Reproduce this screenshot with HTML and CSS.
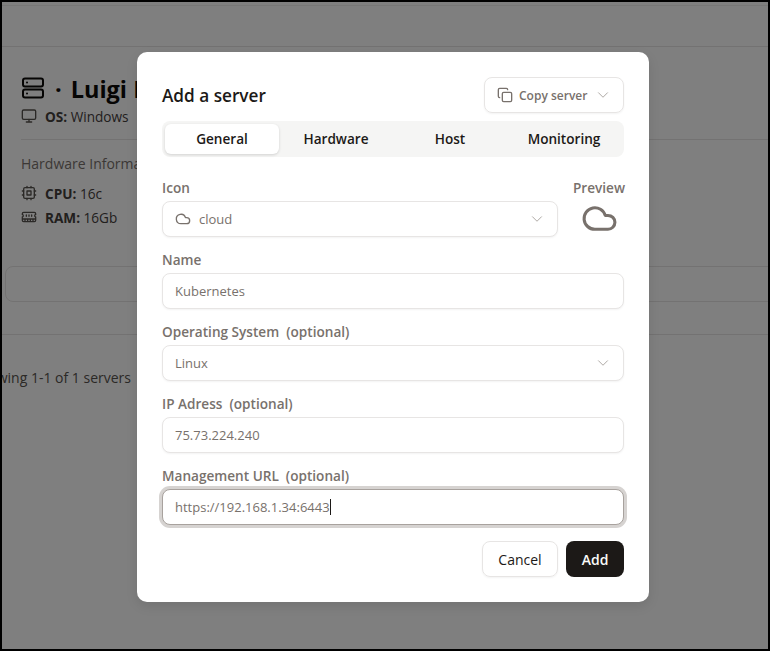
FILE: index.html
```html
<!DOCTYPE html>
<html lang="en">
<head>
<meta charset="utf-8">
<title>Add a server</title>
<link rel="stylesheet" href="styles.css">
</head>
<body>
<div class="frame">
  <div class="page">
    <div class="topbar"><div class="topbar-line"></div></div>
    <section class="details">
      <div class="title-row">
        <svg class="title-icon" viewBox="0 0 24 24" fill="none" stroke="currentColor" stroke-width="2" stroke-linecap="round" stroke-linejoin="round"><rect x="2" y="2.5" width="20" height="8" rx="2"/><rect x="2" y="13.5" width="20" height="8" rx="2"/><path d="M6 6.5h.01M6 17.5h.01"/></svg>
        <h1 class="title"><span class="dot">·</span>Luigi B</h1>
      </div>
      <div class="spec spec-os">
        <svg class="spec-icon" viewBox="0 0 24 24" fill="none" stroke="currentColor" stroke-width="2" stroke-linecap="round" stroke-linejoin="round"><rect x="2" y="3" width="20" height="14" rx="2"/><path d="M8 21h8M12 17v4"/></svg>
        <span><b>OS:</b> Windows</span>
      </div>
      <hr class="rule">
      <div class="section-name">Hardware Information</div>
      <div class="spec">
        <svg class="spec-icon" viewBox="0 0 24 24" fill="none" stroke="currentColor" stroke-width="2" stroke-linecap="round" stroke-linejoin="round"><rect x="4" y="4" width="16" height="16" rx="2"/><rect x="9" y="9" width="6" height="6"/><path d="M15 2v2M15 20v2M2 15h2M2 9h2M20 15h2M20 9h2M9 2v2M9 20v2"/></svg>
        <span><b>CPU:</b> 16c</span>
      </div>
      <div class="spec">
        <svg class="spec-icon" viewBox="0 0 24 24" fill="none" stroke="currentColor" stroke-width="2" stroke-linecap="round" stroke-linejoin="round"><path d="M6 19v-3M10 19v-3M14 19v-3M18 19v-3M8 11V9M16 11V9M12 11V9M2 15h20M2 7a2 2 0 0 1 2-2h16a2 2 0 0 1 2 2v1.1a2 2 0 0 0 0 3.837V17a2 2 0 0 1-2 2H4a2 2 0 0 1-2-2v-5.1a2 2 0 0 0 0-3.837Z"/></svg>
        <span><b>RAM:</b> 16Gb</span>
      </div>
    </section>
    <div class="card-box"></div>
    <div class="pager-rule"></div>
    <div class="showing">Showing 1-1 of 1 servers</div>
  </div>

  <div class="overlay"></div>

  <form class="modal">
    <header class="modal-head">
      <h2 class="modal-title">Add a server</h2>
      <div class="copy-btn">
        <svg class="copy-icon" viewBox="0 0 24 24" fill="none" stroke="currentColor" stroke-width="2" stroke-linecap="round" stroke-linejoin="round"><rect x="8" y="8" width="14" height="14" rx="2"/><path d="M4 16c-1.1 0-2-.9-2-2V4c0-1.1.9-2 2-2h10c1.1 0 2 .9 2 2"/></svg>
        <span>Copy server</span>
        <svg class="chev" viewBox="0 0 24 24" fill="none" stroke="currentColor" stroke-width="1.25" stroke-linecap="round" stroke-linejoin="round"><path d="m6 9 6 6 6-6"/></svg>
      </div>
    </header>

    <nav class="tabs">
      <div class="tab active">General</div>
      <div class="tab">Hardware</div>
      <div class="tab">Host</div>
      <div class="tab">Monitoring</div>
    </nav>

    <div class="icon-row">
      <div class="field grow">
        <div class="label">Icon</div>
        <div class="control select">
          <svg class="cloud-small" viewBox="0 0 24 24" fill="none" stroke="currentColor" stroke-width="2" stroke-linecap="round" stroke-linejoin="round"><path d="M17.5 19H9a7 7 0 1 1 6.71-9h1.79a4.5 4.5 0 1 1 0 9Z"/></svg>
          <span class="value">cloud</span>
          <svg class="chev" viewBox="0 0 24 24" fill="none" stroke="currentColor" stroke-width="1.25" stroke-linecap="round" stroke-linejoin="round"><path d="m6 9 6 6 6-6"/></svg>
        </div>
      </div>
      <div class="preview">
        <div class="label">Preview</div>
        <svg class="cloud-large" viewBox="0 0 24 24" fill="none" stroke="currentColor" stroke-width="2" stroke-linecap="round" stroke-linejoin="round"><path d="M17.5 19H9a7 7 0 1 1 6.71-9h1.79a4.5 4.5 0 1 1 0 9Z"/></svg>
      </div>
    </div>

    <div class="field">
      <div class="label">Name</div>
      <div class="control"><span class="value">Kubernetes</span></div>
    </div>

    <div class="field">
      <div class="label">Operating System&nbsp; (optional)</div>
      <div class="control select">
        <span class="value">Linux</span>
        <svg class="chev" viewBox="0 0 24 24" fill="none" stroke="currentColor" stroke-width="1.25" stroke-linecap="round" stroke-linejoin="round"><path d="m6 9 6 6 6-6"/></svg>
      </div>
    </div>

    <div class="field">
      <div class="label">IP Adress&nbsp; (optional)</div>
      <div class="control"><span class="value">75.73.224.240</span></div>
    </div>

    <div class="field">
      <div class="label">Management URL&nbsp; (optional)</div>
      <div class="control focused"><span class="value">https://192.168.1.34:6443</span><span class="caret"></span></div>
    </div>

    <footer class="actions">
      <div class="btn btn-cancel">Cancel</div>
      <div class="btn btn-add">Add</div>
    </footer>
  </form>
</div>
</body>
</html>
```

FILE: styles.css
```css
* { box-sizing: border-box; }
html, body { margin: 0; height: 100%; }
body { font-family: "Open Sans", "Noto Sans", sans-serif; font-size: 14px; color: #1c1917; }

.frame {
  position: relative;
  width: 770px;
  height: 651px;
  border: 2px solid #000;
  overflow: hidden;
  background: #fff;
}

.page { height: 100%; overflow: hidden; }
.topbar { height: 45px; padding-top: 3px; border-bottom: 1px solid #e7e5e4; }
.topbar-line { border-top: 1px solid #efeeed; }
.details { padding: 28px 19px 0; }
.title-row { display: flex; align-items: center; height: 28px; gap: 10px; }
.title-icon { flex: none; width: 24px; height: 24px; margin-top: -3px; color: #0c0a09; }
.title { margin: 0; font-size: 23.5px; font-weight: 700; line-height: 28px; color: #0c0a09; white-space: nowrap; }
.dot { margin-right: 9px; }
.spec { display: flex; align-items: center; gap: 8px; height: 24px; font-size: 13.6px; color: #44403c; }
.spec-os { margin-top: 1px; }
.spec b { font-weight: 700; }
.spec-icon { flex: none; width: 16px; height: 16px; color: #57534e; }
.rule { border: 0; border-top: 1px solid #e7e5e4; margin: 11px -19px 14px 0; }
.section-name { color: #78716c; height: 19px; margin-bottom: 8px; font-weight: 500; white-space: nowrap; }
.card-box { height: 36px; margin: 37px -10px 0 3px; border: 1px solid #e7e5e4; border-radius: 8px; }
.pager-rule { margin-top: 32px; border-top: 1px solid #e7e5e4; }
.showing { margin: 33px 0 0 -30px; font-size: 14px; color: #57534e; white-space: nowrap; }

.overlay { position: absolute; inset: 0; background: rgba(0, 0, 0, 0.5); }

.modal {
  position: absolute;
  left: 135px;
  top: 50px;
  width: 512px;
  height: 550px;
  padding: 25px;
  background: #fff;
  border-radius: 10px;
  box-shadow: 0 4px 12px rgba(0, 0, 0, 0.1);
}

.modal-head { display: flex; justify-content: space-between; align-items: center; height: 36px; }
.modal-title { margin: 0; font-size: 17.2px; font-weight: 600; color: #1c1917; white-space: nowrap; }
.copy-btn {
  display: flex; align-items: center;
  width: 140px; height: 36px; padding: 0 11px 0 12px;
  border: 1px solid #e7e5e4; border-radius: 8px;
  box-shadow: 0 1px 2px rgba(0,0,0,.05);
  color: #78716c; font-size: 12px; font-weight: 550;
}
.copy-icon { flex: none; width: 16px; height: 16px; margin-right: 6px; }
.chev { flex: none; width: 18px; height: 18px; margin-left: auto; color: #a8a29e; }

.tabs {
  display: grid; grid-template-columns: repeat(4, 1fr);
  height: 36px; margin-top: 8px; padding: 3px;
  background: #f5f5f4; border-radius: 8px;
}
.tab { display: flex; align-items: center; justify-content: center; padding-bottom: 1px; font-size: 13.6px; font-weight: 560; color: #1c1917; border-radius: 6px; }
.tab.active { background: #fff; box-shadow: 0 1px 3px rgba(0,0,0,.15); }

.icon-row { display: flex; gap: 16px; margin-top: 22px; }
.grow { flex: 1; }
.preview { display: flex; flex-direction: column; align-items: center; width: 50px; }
.cloud-large { width: 37px; height: 37px; margin-top: -1px; color: #78716c; }
.cloud-small { flex: none; width: 16px; height: 16px; margin-right: 8px; color: #78716c; }

.label { height: 22px; line-height: 18px; font-size: 13.6px; font-weight: 560; color: #78716c; white-space: pre; }
.control {
  display: flex; align-items: center;
  height: 36px; padding: 0 11px 0 12px; margin-bottom: 14px;
  border: 1px solid #e7e5e4; border-radius: 8px;
  box-shadow: 0 1px 2px rgba(0,0,0,.05);
  background: #fff;
}
.value { font-size: 13px; color: #78716c; }
.caret { width: 1px; height: 16px; background: #1c1917; }
.control.focused { border-color: #a8a29e; box-shadow: 0 0 0 3px #d6d3d1; }

.actions { display: flex; justify-content: flex-end; gap: 8px; margin-top: 16px; }
.btn { display: flex; align-items: center; justify-content: center; height: 36px; border-radius: 8px; font-weight: 500; }
.btn-cancel { width: 76px; border: 1px solid #e7e5e4; box-shadow: 0 1px 2px rgba(0,0,0,.05); }
.btn-add { width: 58px; background: #1c1917; color: #fafaf9; font-weight: 600; }
```
